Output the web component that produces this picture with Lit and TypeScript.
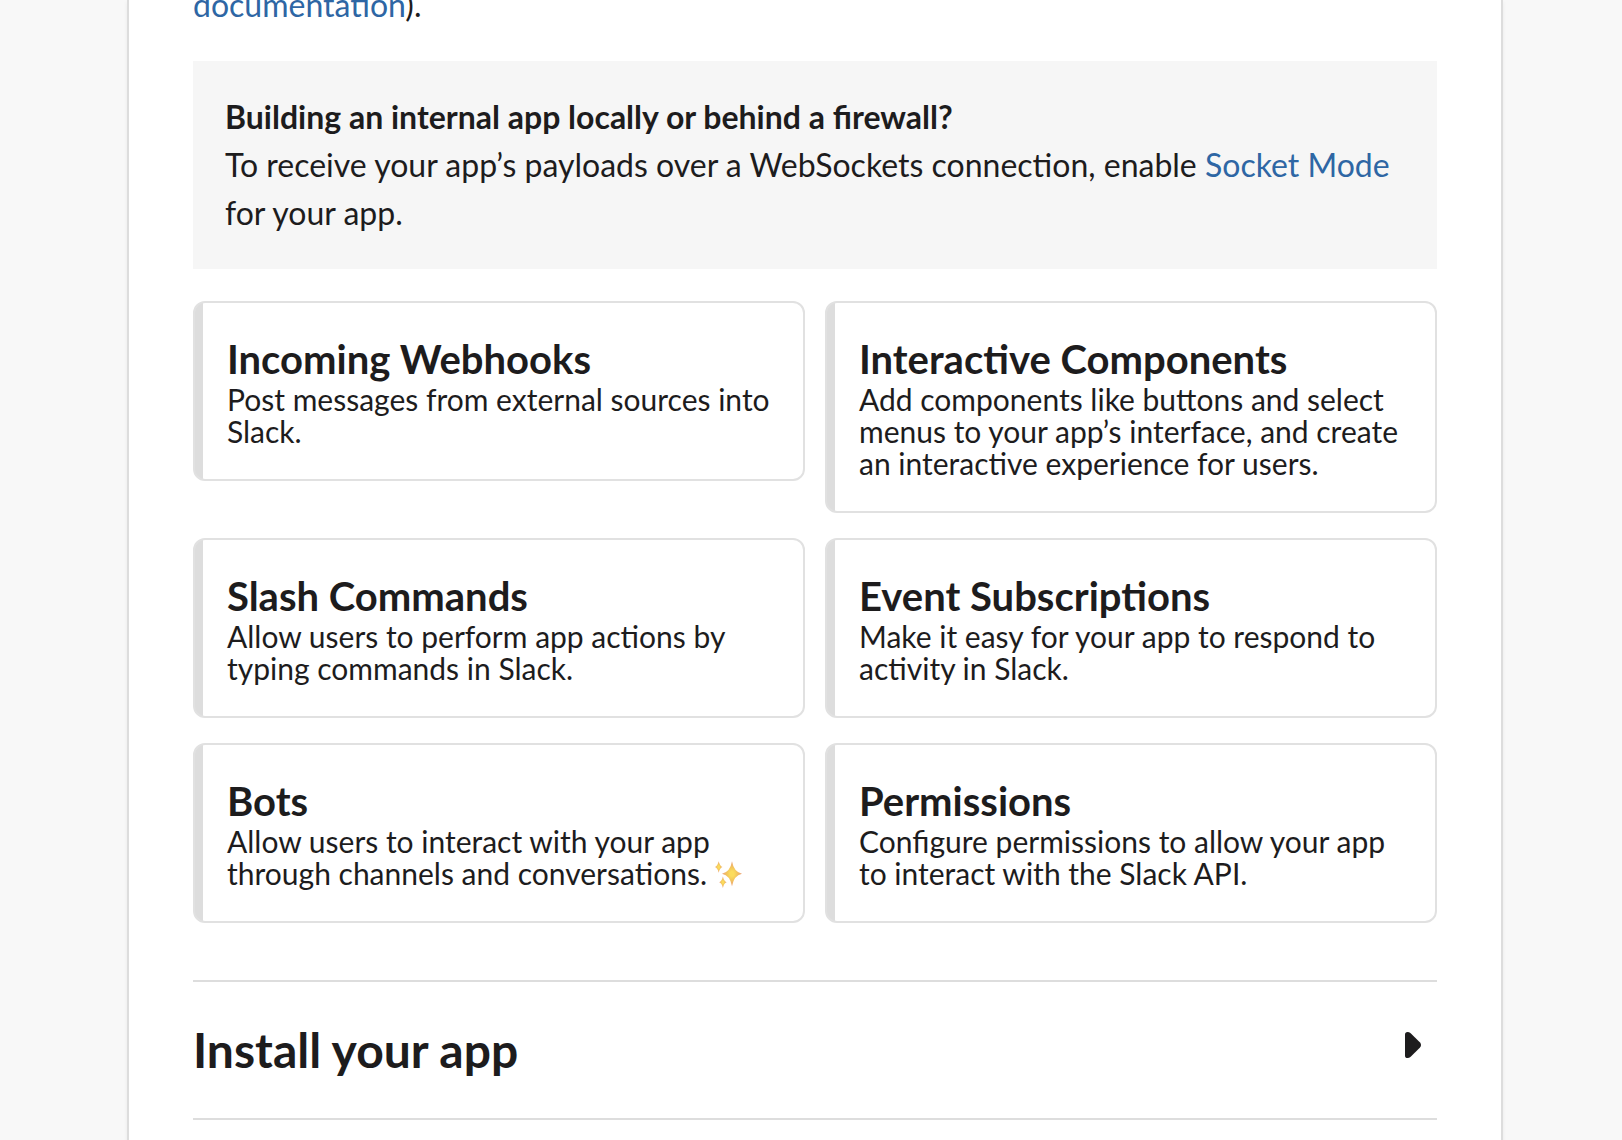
import { LitElement, html, css } from "lit";
import { customElement, property } from "lit/decorators.js";

interface Feature {
  title: string;
  text: string;
  sparkle?: boolean;
}

const FEATURES: Feature[] = [
  { title: "Incoming Webhooks", text: "Post messages from external sources into Slack." },
  {
    title: "Interactive Components",
    text: "Add components like buttons and select menus to your app’s interface, and create an interactive experience for users.",
  },
  { title: "Slash Commands", text: "Allow users to perform app actions by typing commands in Slack." },
  { title: "Event Subscriptions", text: "Make it easy for your app to respond to activity in Slack." },
  { title: "Bots", text: "Allow users to interact with your app through channels and conversations.", sparkle: true },
  { title: "Permissions", text: "Configure permissions to allow your app to interact with the Slack API." },
];

@customElement("feature-card")
class FeatureCard extends LitElement {
  @property({ attribute: false }) feature!: Feature;

  static styles = css`
    :host {
      display: block;
    }
    .card {
      box-sizing: border-box;
      padding: 32px 22px 32px 32px;
      border: 2px solid #e1e1e1;
      border-radius: 12px;
      background: linear-gradient(#ddd, #ddd) 0 0 / 8px 100% no-repeat #fff;
    }
    .title {
      margin: 0;
      font-size: 40px;
      line-height: 48px;
      font-weight: 700;
    }
    .text {
      margin: 0;
      font-size: 30px;
      line-height: 32px;
    }
    .sparkle {
      display: inline-block;
      width: 28px;
      height: 27px;
      vertical-align: -3px;
    }
  `;

  render() {
    const { title, text, sparkle } = this.feature;
    return html`<article class="card">
      <h3 class="title">${title}</h3>
      <p class="text">${text}${sparkle
        ? html` <svg class="sparkle" viewBox="0 0 28 27" role="img" aria-label="sparkles">
              <defs>
                <radialGradient id="glow">
                  <stop offset="0.2" stop-color="#fbdc5c" />
                  <stop offset="0.5" stop-color="#f3c65c" />
                  <stop offset="1" stop-color="#eba07c" />
                </radialGradient>
              </defs>
              <g fill="url(#glow)">
                <path d="M17 0.3Q18.8 11 27 12.7Q18.8 14.4 17 25.3Q15.2 14.4 7 12.7Q15.2 11 17 0.3Z" />
                <path d="M3.7 0.3Q4.8 5 7.4 5.9Q4.8 6.8 3.7 11.7Q2.6 6.8 0 5.9Q2.6 5 3.7 0.3Z" />
                <path d="M7.9 15.6Q9 20.4 11.6 21.2Q9 22 7.9 26.9Q6.8 22 4.2 21.2Q6.8 20.4 7.9 15.6Z" />
              </g>
            </svg>`
        : ""}</p>
    </article>`;
  }
}

@customElement("app-root")
class AppRoot extends LitElement {
  static styles = css`
    :host {
      display: block;
      height: 1140px;
      overflow: hidden;
      background: #f8f8f8;
      color: #1d1c1d;
      font-family: Lato, "Liberation Sans", sans-serif;
      font-size: 32px;
      line-height: 48px;
    }
    .panel {
      box-sizing: border-box;
      width: 1376px;
      height: 1200px;
      margin-left: 127px;
      padding: 0 64px;
      border: solid #ddd;
      border-width: 0 2px;
      background: #fff;
      box-shadow: 0 2px 4px rgba(0, 0, 0, 0.06);
    }
    .intro {
      height: 29px;
      margin: 0 0 32px;
      display: flex;
      align-items: flex-end;
    }
    a {
      color: #2e66a4;
      text-decoration: none;
    }
    .callout {
      padding: 32px;
      margin-bottom: 32px;
      background: #f6f6f6;
    }
    .callout p {
      margin: 0;
    }
    .grid {
      display: grid;
      grid-template-columns: 1fr 1fr;
      align-items: start;
      gap: 25px 20px;
    }
    .section {
      display: flex;
      justify-content: space-between;
      align-items: flex-start;
      margin-top: 57px;
      padding: 32px 16px 32px 0;
      border: solid #ddd;
      border-width: 2px 0;
    }
    .heading {
      margin: 0;
      font-size: 48px;
      line-height: 72px;
      font-weight: 700;
    }
    .arrow {
      width: 16px;
      height: 26px;
      margin-top: 18px;
    }
  `;

  render() {
    return html`<main class="panel">
      <p class="intro"><span><a>documentation</a>).</span></p>
      <section class="callout">
        <p><strong>Building an internal app locally or behind a firewall?</strong></p>
        <p>To receive your app’s payloads over a WebSockets connection, enable <a>Socket Mode</a> for your app.</p>
      </section>
      <div class="grid">${FEATURES.map((f) => html`<feature-card .feature=${f}></feature-card>`)}</div>
      <section class="section">
        <h2 class="heading">Install your app</h2>
        <svg class="arrow" viewBox="0 0 16 26" aria-hidden="true">
          <path
            d="M0 2.6Q0 0 2.6 0Q4.2 0 5.4 1.1L14.8 10.2Q16 11.4 16 13Q16 14.6 14.8 15.8L5.4 24.9Q4.2 26 2.6 26Q0 26 0 23.4Z"
            fill="#1d1c1d"
          />
        </svg>
      </section>
    </main>`;
  }
}
